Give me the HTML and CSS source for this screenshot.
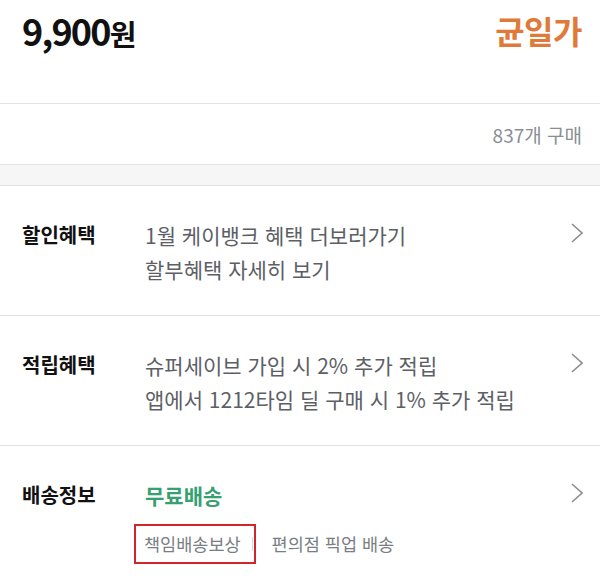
FILE: index.html
```html
<!DOCTYPE html>
<html lang="ko">

<head>
    <meta charset="UTF-8" />
    <meta name="viewport" content="width=device-width, initial-scale=1.0" />
    <title>상품 정보</title>
    <link rel="stylesheet" href="styles.css">
</head>

<body>

    <div class="price-row">
        <span class="price">9,900<span class="won">원</span></span>
        <span class="badge">균일가</span>
    </div>

    <div class="sold-row">837개 구매</div>

    <div class="gap-band"></div>

    <div class="info-row">
        <div class="info-label">할인혜택</div>
        <div class="info-body">
            <p>1월 케이뱅크 혜택 더보러가기</p>
            <p>할부혜택 자세히 보기</p>
        </div>
        <svg class="chevron" viewBox="0 0 12 20"><polyline points="1,1 11,10 1,19" /></svg>
    </div>

    <div class="info-row">
        <div class="info-label">적립혜택</div>
        <div class="info-body">
            <p>슈퍼세이브 가입 시 2% 추가 적립</p>
            <p>앱에서 1212타임 딜 구매 시 1% 추가 적립</p>
        </div>
        <svg class="chevron" viewBox="0 0 12 20"><polyline points="1,1 11,10 1,19" /></svg>
    </div>

    <div class="info-row last">
        <div class="info-label">배송정보</div>
        <div class="info-body">
            <p class="free">무료배송</p>
            <div class="ship-options">
                <span class="marked">책임배송보상<i class="divider"></i></span>
                <span>편의점 픽업 배송</span>
            </div>
        </div>
        <svg class="chevron" viewBox="0 0 12 20"><polyline points="1,1 11,10 1,19" /></svg>
    </div>

</body>

</html>
```

FILE: styles.css
```css
:root {
    --text: #111;
    --body: #5c6066;
    --muted: #8a8e94;
    --line: #e2e3e6;
    --orange: #e07a3a;
    --green: #36a070;
    --mark: #d0262b;
}

* {
    box-sizing: border-box;
}

body {
    margin: 0;
    background: #fff;
    color: var(--text);
    font-family: "Noto Sans CJK KR", "Noto Sans", sans-serif;
}

.price-row {
    height: 104px;
    padding: 7px 18px 0 22px;
    display: flex;
    justify-content: space-between;
    align-items: flex-start;
    border-bottom: 1px solid var(--line);
}

.price {
    font-size: 36px;
    line-height: 46px;
    font-weight: 700;
    letter-spacing: -1.8px;
}

.price .won {
    font-size: 29px;
    letter-spacing: 0;
}

.badge {
    color: var(--orange);
    font-size: 32px;
    line-height: 46px;
    font-weight: 700;
    letter-spacing: -0.5px;
}

.sold-row {
    height: 61px;
    padding: 0 18px;
    display: flex;
    justify-content: flex-end;
    align-items: center;
    color: var(--muted);
    font-size: 19px;
    border-bottom: 1px solid var(--line);
}

.gap-band {
    height: 21px;
    background: #f6f6f7;
    border-bottom: 1px solid var(--line);
}

.info-row {
    display: flex;
    align-items: flex-start;
    padding: 32px 17px 29px 22px;
    border-bottom: 1px solid var(--line);
}

.info-row.last {
    border-bottom: none;
}

.info-label {
    width: 123px;
    flex-shrink: 0;
    font-size: 20px;
    line-height: 34px;
    font-weight: 700;
}

.info-body {
    flex: 1;
    color: var(--body);
    font-size: 21px;
    line-height: 34px;
}

.info-body p {
    margin: 0;
}

.info-body .free {
    color: var(--green);
    font-weight: 700;
}

.chevron {
    width: 12px;
    height: 20px;
    margin-top: 5px;
    fill: none;
    stroke: #8b8d91;
    stroke-width: 1.6;
}

.ship-options {
    margin-top: 12px;
    margin-left: -11px;
    display: flex;
    align-items: center;
    gap: 16px;
    color: #7a7e84;
    font-size: 17.5px;
}

.marked {
    display: flex;
    align-items: center;
    height: 40px;
    padding: 0 1px 0 8px;
    border: 2px solid var(--mark);
}

.divider {
    width: 1px;
    height: 14px;
    margin-left: 11px;
    background: #d8d9dc;
}
```
